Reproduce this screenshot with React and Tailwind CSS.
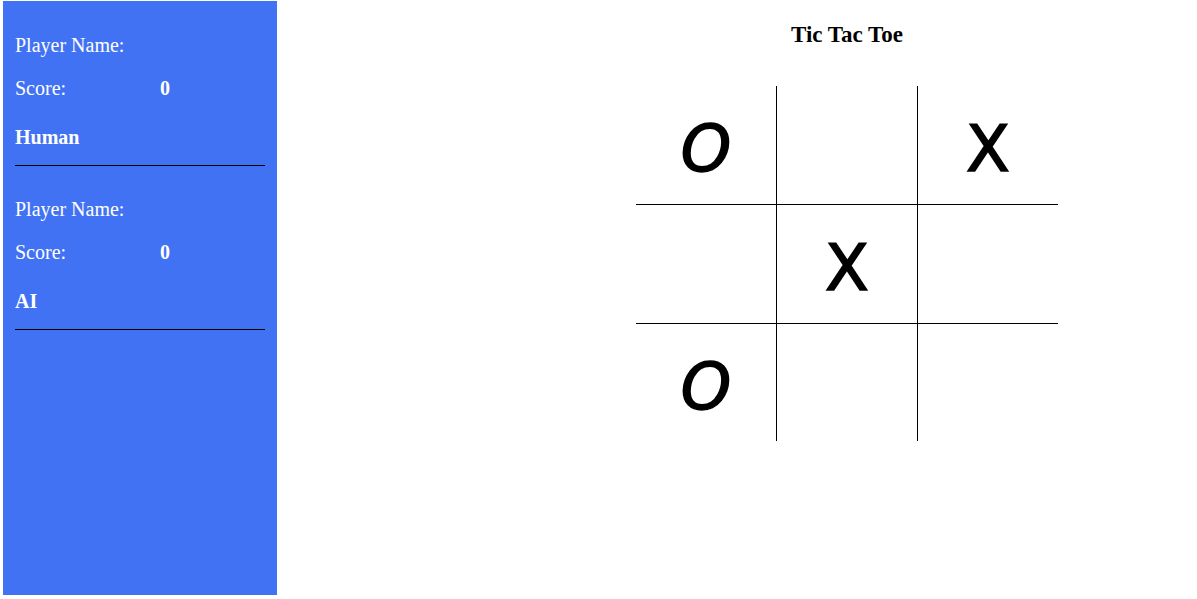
const board = ["O", "", "X", "", "X", "", "O", "", ""];

const players = [
  { name: "", score: 0, label: "Human" },
  { name: "", score: 0, label: "AI" },
];

function PlayerCard({ player }) {
  return (
    <div>
      <div className="h-[23px] leading-[23px] mb-[20px]">Player Name: {player.name}</div>
      <div className="flex h-[23px] leading-[23px] mb-[26px]">
        <span className="w-[145px]">Score:</span>
        <span className="font-bold">{player.score}</span>
      </div>
      <div className="h-[23px] leading-[23px] font-bold">{player.label}</div>
      <div className="mt-[16px] mb-[32px] w-[250px] border-t border-black" />
    </div>
  );
}

export default function App() {
  return (
    <div className="flex pl-[3px] pt-[1px] bg-white min-h-screen font-['Liberation_Serif',serif]">
      <aside className="w-[274px] h-[594px] bg-[#4272f4] text-white text-[20px] pl-[12px] pt-[33px] shrink-0">
        {players.map((p) => (
          <PlayerCard key={p.label} player={p} />
        ))}
      </aside>

      <main className="flex-1 pt-[21px]">
        <div className="ml-[359px] w-[422px]">
          <h1 className="text-center font-bold text-[23px] leading-[26px] mb-[38px] text-black">
            Tic Tac Toe
          </h1>
          <div className="grid grid-cols-[141px_141px_140px] grid-rows-[119px_119px_117px]">
            {board.map((cell, i) => {
              const col = i % 3;
              const row = Math.floor(i / 3);
              return (
                <div
                  key={i}
                  className={
                    "flex items-center justify-center border-black " +
                    (col < 2 ? "border-r " : "") +
                    (row < 2 ? "border-b" : "")
                  }
                >
                  {cell && (
                    <span
                      className={
                        "font-['DejaVu_Sans',sans-serif] text-[64px] leading-none pt-[8px] text-black [-webkit-text-stroke:1.5px_black] " +
                        (cell === "O" ? "italic" : "")
                      }
                    >
                      {cell}
                    </span>
                  )}
                </div>
              );
            })}
          </div>
        </div>
      </main>
    </div>
  );
}
